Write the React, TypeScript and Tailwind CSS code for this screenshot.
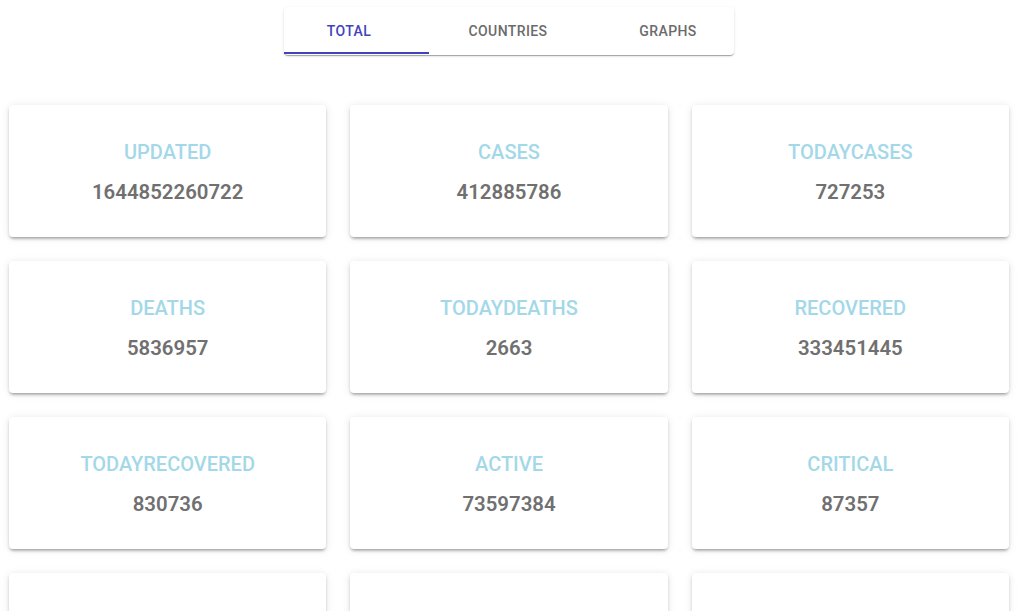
import React from "react";

const stats: { label: string; value: string }[] = [
    { label: "updated", value: "1644852260722" },
    { label: "cases", value: "412885786" },
    { label: "todayCases", value: "727253" },
    { label: "deaths", value: "5836957" },
    { label: "todayDeaths", value: "2663" },
    { label: "recovered", value: "333451445" },
    { label: "todayRecovered", value: "830736" },
    { label: "active", value: "73597384" },
    { label: "critical", value: "87357" },
    { label: "casesPerOneMillion", value: "52970" },
    { label: "deathsPerOneMillion", value: "748.8" },
    { label: "tests", value: "5424851237" },
];

const StatCard: React.FC<{ label: string; value: string }> = ({ label, value }) => (
    <div className="flex h-[132px] flex-col items-center rounded-[4px] bg-white pt-[33px] shadow-[0_3px_3px_-2px_rgba(0,0,0,0.25),0_2px_3px_0_rgba(0,0,0,0.14),0_1px_8px_0_rgba(0,0,0,0.10)]">
        <div className="text-[20px] font-medium uppercase leading-[28px] text-[#a3d8e9]">{label}</div>
        <div className="mt-[12px] text-[20.4px] font-semibold leading-[28px] text-[#707070]">{value}</div>
    </div>
);

export default function App() {
    return (
        <div className="min-h-screen bg-white font-['Roboto',sans-serif]">
            <div className="flex justify-center pt-[7px] pr-[2px]">
                <div className="relative flex h-[48px] w-[450px] rounded-[4px] bg-white shadow-[0_2px_1px_-1px_rgba(0,0,0,0.2),0_1px_1px_0_rgba(0,0,0,0.14),0_1px_3px_0_rgba(0,0,0,0.12)]">
                    <button className="flex w-[130px] items-center justify-center pt-[1px] text-[14px] font-medium tracking-[0.4px] text-[#4242bd]">
                        TOTAL
                    </button>
                    <button className="flex w-[188px] items-center justify-center pt-[1px] text-[14px] font-medium tracking-[0.4px] text-[#6b6b6b]">
                        COUNTRIES
                    </button>
                    <button className="flex w-[132px] items-center justify-center pt-[1px] text-[14px] font-medium tracking-[0.4px] text-[#6b6b6b]">
                        GRAPHS
                    </button>
                    <span className="absolute bottom-[1px] left-0 h-[2px] w-[145px] bg-[#4242bd]" />
                </div>
            </div>

            <div className="ml-[9px] mt-[50px] grid w-[1000px] grid-cols-3 gap-[24px]">
                {stats.map(s => (
                    <StatCard key={s.label} label={s.label} value={s.value} />
                ))}
            </div>
        </div>
    );
}
